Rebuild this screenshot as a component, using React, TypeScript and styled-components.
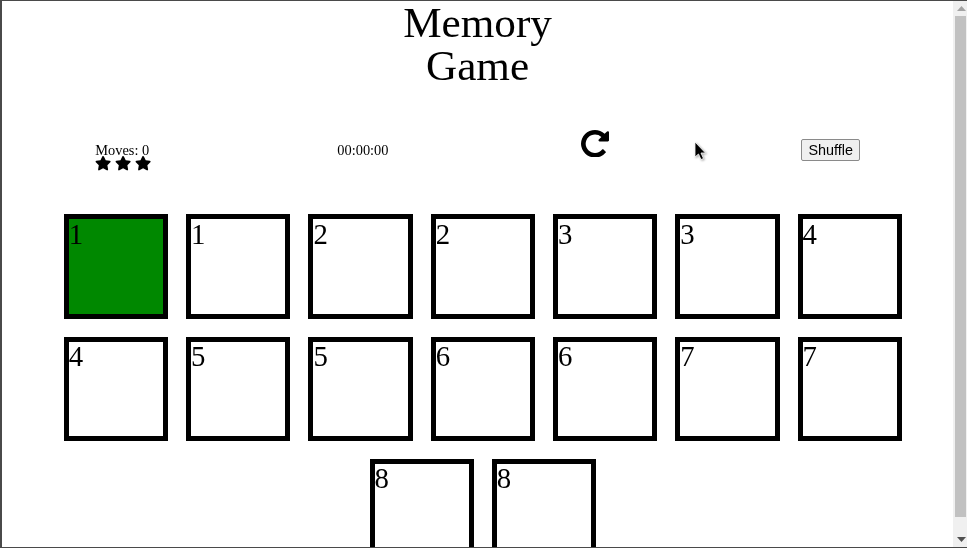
import React from "react";
import styled, { createGlobalStyle } from "styled-components";
import { FaStar } from "react-icons/fa";

const Global = createGlobalStyle`
  html, body { margin: 0; padding: 0; height: 100%; overflow: hidden; background: #fff; }
  #root { height: 100%; }
`;

const Frame = styled.div`
  position: relative;
  box-sizing: border-box;
  width: 967px;
  height: 548px;
  display: flex;
  overflow: hidden;
  background: #fff;
  border-top: 1px solid #4a4a4a;
  border-bottom: 1px solid #4a4a4a;
  border-left: 2px solid #4a4a4a;
  font-family: "Liberation Serif", "Times New Roman", serif;
  font-size: 14.4px;
  color: #000;
`;

const Page = styled.main`
  flex: 1;
  min-width: 0;
  height: 100%;
  will-change: transform;
`;

const Title = styled.h1`
  width: 200px;
  margin: 0 auto;
  font-size: 43.2px;
  font-weight: 400;
  line-height: 43px;
  text-align: center;
`;

const Toolbar = styled.section`
  display: grid;
  grid-template-columns: 242px 244px 220px auto;
  justify-items: start;
  align-items: start;
  height: 38px;
  margin-top: 55px;
  padding-left: 93.3px;
`;

const Score = styled.div`
  line-height: 17px;
`;

const Stars = styled.div`
  display: flex;
  gap: 3.6px;
  height: 9px;
  align-items: center;
  svg {
    width: 16.2px;
    height: 14.4px;
  }
`;

const Timer = styled.div`
  line-height: 17px;
`;

const Reload = styled.svg`
  display: block;
  width: 28px;
  height: 27.5px;
  margin-top: -12.500px;
`;

const ShuffleButton = styled.button`
  box-sizing: border-box;
  width: 59px;
  height: 22px;
  margin-top: -3px;
  padding: 0;
  font-family: "Liberation Sans", Arial, sans-serif;
  font-size: 14.4px;
  color: #000;
  background: #efefef;
  border: 1px solid #8a8a8a;
  border-radius: 2px;
`;

const Board = styled.section`
  display: flex;
  flex-wrap: wrap;
  justify-content: center;
  width: 857px;
  margin: 34.4px 0 0 52.350px;
`;

const Card = styled.div<{ $matched?: boolean }>`
  box-sizing: border-box;
  width: 104.3px;
  height: 104.3px;
  margin: 0 9px 18px;
  padding-top: 0.25px;
  border: 5px solid #000;
  background: ${(p) => (p.$matched ? "#008800" : "#fff")};
  font-size: 28.8px;
  line-height: 29.4px;
`;

const Cursor = styled.svg`
  position: absolute;
  left: 692px;
  top: 140px;
  filter: drop-shadow(1px 1px 1px rgba(0, 0, 0, 0.35));
`;

const Scrollbar = styled.aside`
  flex: none;
  display: flex;
  flex-direction: column;
  align-items: flex-end;
  width: 14px;
  height: 100%;
  background: #f0f0f0;
`;

const ArrowSlot = styled.div`
  display: flex;
  align-items: center;
  justify-content: center;
  width: 12px;
  height: 15px;
`;

const Thumb = styled.div`
  width: 11px;
  flex: 1;
  margin-right: 1px;
  margin-bottom: 15px;
  background: #c1c1c1;
`;

const values = [1, 1, 2, 2, 3, 3, 4, 4, 5, 5, 6, 6, 7, 7, 8, 8];

export default function App() {
  return (
    <>
      <Global />
      <Frame>
        <Page>
          <Title>Memory Game</Title>
          <Toolbar>
            <Score>
              Moves: 0
              <Stars>
                <FaStar />
                <FaStar />
                <FaStar />
              </Stars>
            </Score>
            <Timer>00:00:00</Timer>
            <Reload viewBox="128 128 1536 1536" preserveAspectRatio="none">
              <path d="M1664 256v448q0 26-19 45t-45 19h-448q-42 0-59-40-17-39 14-69l138-138q-148-137-349-137-104 0-198.500 40.500t-163.500 109.500-109.500 163.500-40.500 198.500 40.500 198.500 109.500 163.500 163.500 109.500 198.500 40.500q119 0 225-52t179-147q7-10 23-12 15 0 25 9l137 138q9 8 9.500 20.500t-7.500 22.500q-109 132-264 204.500t-327 72.500q-156 0-298-61t-245-164-164-245-61-298 61-298 164-245 245-164 298-61q147 0 284.500 55.500t244.500 156.500l130-129q29-31 70-14 39 17 39 59z" />
            </Reload>
            <ShuffleButton>Shuffle</ShuffleButton>
          </Toolbar>
          <Board>
            {values.map((v, i) => (
              <Card key={i} $matched={i === 0}>
                {v}
              </Card>
            ))}
          </Board>
        </Page>
        <Scrollbar>
          <ArrowSlot>
            <svg width="9" height="5" viewBox="0 0 9 5"><path d="M4.5 0 9 5H0z" fill="#a3a3a3" /></svg>
          </ArrowSlot>
          <Thumb />
          <ArrowSlot>
            <svg width="9" height="5" viewBox="0 0 9 5"><path d="M0 0h9L4.500 5z" fill="#505050" /></svg>
          </ArrowSlot>
        </Scrollbar>
        <Cursor width="14" height="21" viewBox="0 0 14 21">
          <path d="M1 1v15l3.500-3 2.500 5.500 2.500-1-2.500-5.500h4.500z" fill="#000" stroke="#fff" strokeWidth="0.800" />
        </Cursor>
      </Frame>
    </>
  );
}
